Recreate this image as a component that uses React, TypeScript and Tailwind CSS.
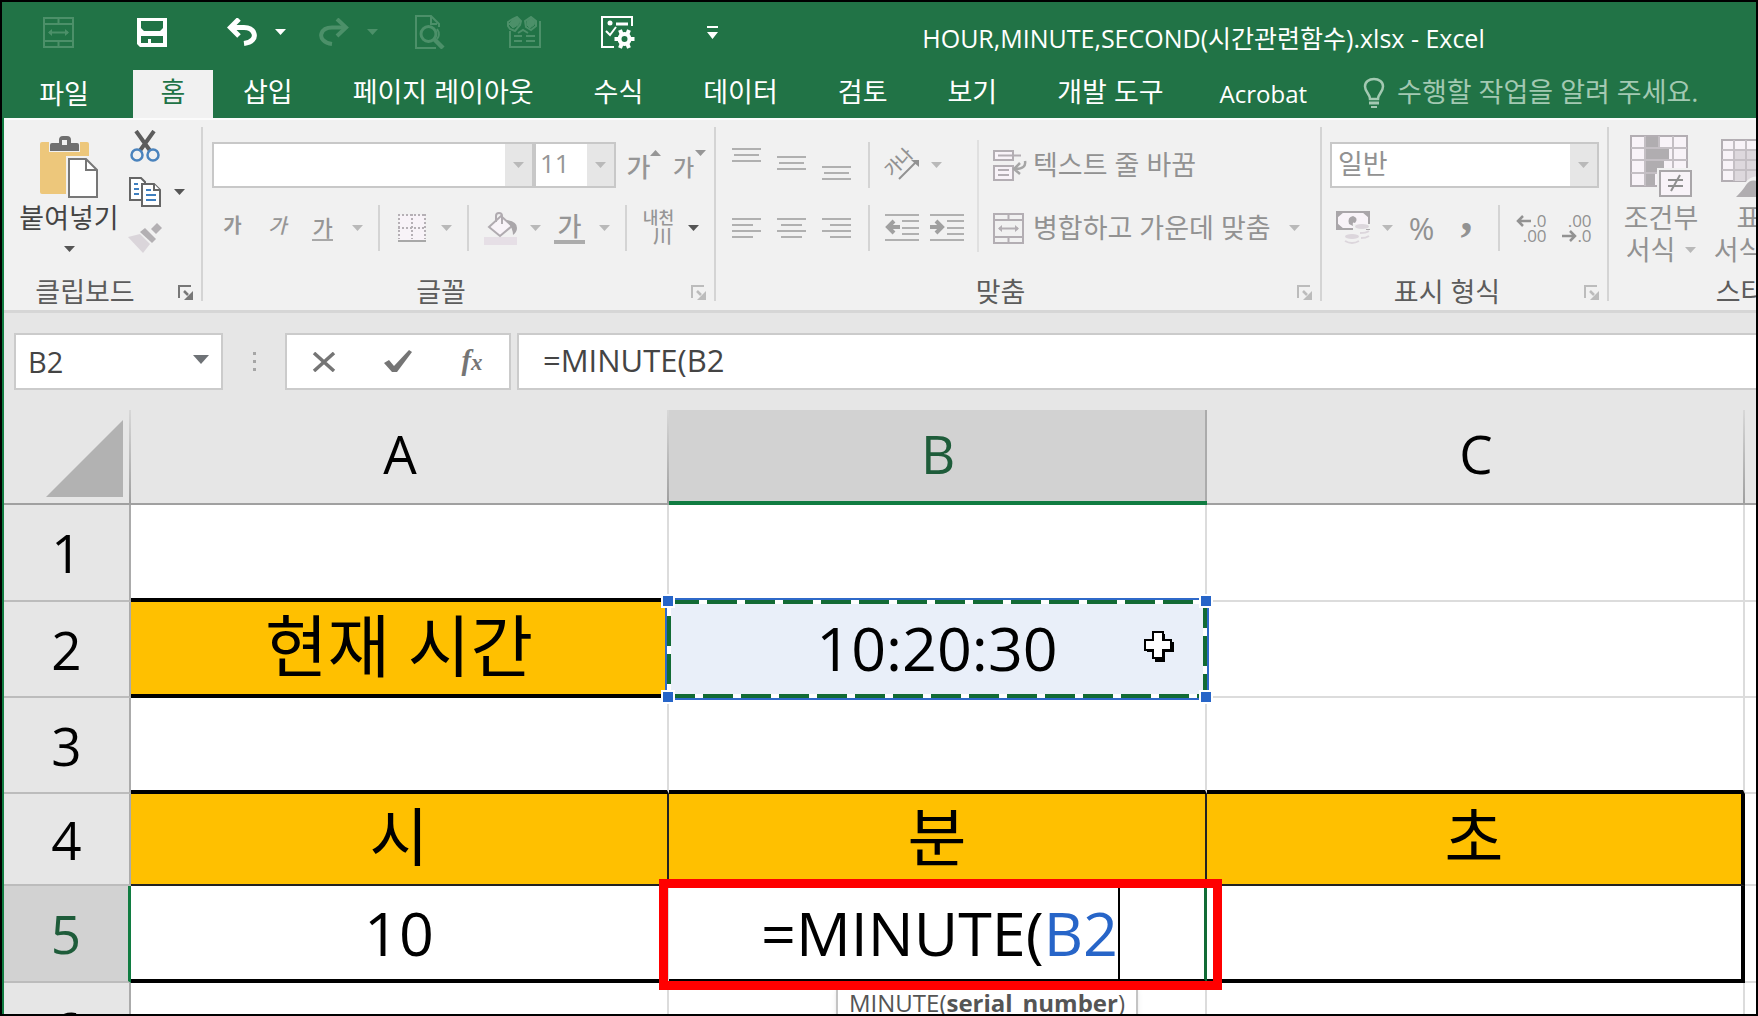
import React from "react";

type Kids = { children?: React.ReactNode };

/* ---------- small shared parts ---------- */

function Caret({ className = "" }: { className?: string }) {
  return (
    <svg viewBox="0 0 11 6" className={`h-[6px] w-[11px] shrink-0 ${className}`} aria-hidden="true">
      <path d="M0 0H11L5.5 6Z" fill="currentColor" />
    </svg>
  );
}

function Tool({ label, children, className = "" }: Kids & { label: string; className?: string }) {
  return (
    <button type="button" aria-label={label} className={`flex h-[46px] w-[45px] shrink-0 items-center justify-center ${className}`}>
      {children}
    </button>
  );
}

function MenuArrow({ label, dark = false }: { label: string; dark?: boolean }) {
  return (
    <button
      type="button"
      aria-label={label}
      className={`flex h-[46px] w-6 shrink-0 items-center justify-center ${dark ? "text-[#555555]" : "text-[#b9b9b9]"}`}
    >
      <Caret />
    </button>
  );
}

function InnerLine() {
  return (
    <span className="flex h-[46px] w-5 shrink-0 justify-center">
      <span className="w-[2px] bg-[#d4d4d4]" />
    </span>
  );
}

function GroupLine() {
  return <span className="mt-[7px] h-[174px] w-[2px] shrink-0 bg-[#d4d4d4]" />;
}

function GroupLabel({ text, dark = false, launcher = true }: { text: string; dark?: boolean; launcher?: boolean }) {
  return (
    <div className="mt-auto flex h-8 items-center pr-2 text-[#5c5c5c]">
      <span className="flex-1 text-center leading-8 whitespace-nowrap">{text}</span>
      {launcher && (
        <button type="button" aria-label={`${text} 설정`} className={`flex w-[27px] justify-end ${dark ? "text-[#777777]" : "text-[#bcbcbc]"}`}>
          <svg viewBox="0 0 15 15" className="h-[15px] w-[15px]" fill="none" stroke="currentColor" aria-hidden="true">
            <path d="M1 13V1H13" strokeWidth="2" />
            <path d="M15 6V15H6Z" fill="currentColor" stroke="none" />
            <path d="M6 6L10 10" strokeWidth="2.500" />
          </svg>
        </button>
      )}
    </div>
  );
}

function Bars({ rows, height }: { rows: [number, number, number][]; height: number }) {
  return (
    <svg viewBox={`0 0 29 ${height}`} width="29" height={height} aria-hidden="true">
      {rows.map(([x, y, w], i) => (
        <rect key={i} x={x} y={y} width={w} height="2" fill="#b0b0b0" />
      ))}
    </svg>
  );
}

/* ---------- title bar ---------- */

function MergeIcon({ className = "" }: { className?: string }) {
  return (
    <svg viewBox="0 0 31 31" className={`h-[31px] w-[31px] ${className}`} fill="none" stroke="currentColor" strokeWidth="2" aria-hidden="true">
      <path d="M1 1H30V30H1ZM1 7H30M1 24H30M15.500 1V7M15.500 24V30" />
      <path d="M6 15.500H25" />
      <path d="M9 12L5 15.500L9 19ZM22 12L26 15.500L22 19Z" fill="currentColor" strokeWidth="0" />
    </svg>
  );
}

function UndoIcon({ flip = false }: { flip?: boolean }) {
  return (
    <svg viewBox="0 0 30 28" className="h-7 w-[30px]" fill="none" stroke="currentColor" strokeWidth={flip ? 4 : 5} aria-hidden="true">
      {flip ? (
        <>
          <path d="M13 26C5 25 1 20 2.500 15.500C4 11 8 9.500 13 9.500H26" />
          <path d="M18 1L27 9.500L18 18" />
        </>
      ) : (
        <>
          <path d="M17 25.500C25 24.500 28.500 20 27 15.500C25.500 11 22 9.500 17 9.500H4" />
          <path d="M12 1L3.500 9.500L12 18" />
        </>
      )}
    </svg>
  );
}

function QuickAccess() {
  const cell = "flex h-full w-[94px] shrink-0 items-center justify-center";
  const pair = "flex h-full w-[92px] shrink-0 items-center gap-[18px] pl-7";
  return (
    <div className="flex h-full shrink-0 pl-[9px] text-white">
      <button type="button" aria-label="셀 병합" className={`${cell} text-[#4c9069]`}>
        <MergeIcon />
      </button>
      <button type="button" aria-label="저장" className={cell}>
        <svg viewBox="0 0 30 30" className="h-[30px] w-[30px]" aria-hidden="true">
          <path
            d="M0 1H30V30H3L0 27ZM4 4V11L7 14H23L26 11V4ZM4 19V26H11V22H14V26H26V19Z"
            fill="currentColor"
            fillRule="evenodd"
          />
        </svg>
      </button>
      <div className={pair}>
        <button type="button" aria-label="실행 취소"><UndoIcon /></button>
        <button type="button" aria-label="실행 취소 목록"><Caret /></button>
      </div>
      <div className={`${pair} text-[#4c9069]`}>
        <button type="button" aria-label="다시 실행"><UndoIcon flip /></button>
        <button type="button" aria-label="다시 실행 목록"><Caret /></button>
      </div>
      <button type="button" aria-label="인쇄 미리 보기" className={`${cell} text-[#4c9069]`}>
        <svg viewBox="0 0 30 34" className="h-[34px] w-[30px]" fill="none" stroke="currentColor" aria-hidden="true">
          <path d="M21 33H1V1H16L24 9V12M16 1V9H22" strokeWidth="2" />
          <circle cx="13.500" cy="19" r="7.500" strokeWidth="3" />
          <path d="M19 24L28 33" strokeWidth="4.500" />
          <path d="M22 14C25 18 24 22 22 24" strokeWidth="2" />
        </svg>
      </button>
      <button type="button" aria-label="공유 통합 문서" className={`${cell} text-[#4c9069]`}>
        <svg viewBox="0 0 34 32" className="h-8 w-[34px]" fill="none" stroke="currentColor" strokeWidth="2" aria-hidden="true">
          <path d="M3 15V31H33V5" />
          <path d="M7 20H15M19 20H28M7 25H15M19 25H28" />
          <path d="M1 6L6 3L10 1L14 5L13 9L8 15L3 13L1 10Z" />
          <path d="M6 4L10 2L13 5L11 9L6 12L2 8Z" fill="currentColor" strokeWidth="1" />
          <path d="M18 5L24 1L29 5V10L24 14L19 11Z" />
          <path d="M20 5L24 2L28 5L27 9L23 12L20 9Z" fill="currentColor" strokeWidth="1" />
          <path d="M11 17L16 14L21 17" />
        </svg>
      </button>
      <button type="button" aria-label="옵션" className={cell}>
        <svg viewBox="0 0 34 33" className="h-[33px] w-[34px]" fill="none" stroke="currentColor" strokeWidth="2" aria-hidden="true">
          <path d="M13 31H1V1H31V10" />
          <circle cx="9" cy="7" r="2.500" fill="currentColor" stroke="none" />
          <path d="M15 8H27" strokeWidth="3" />
          <path d="M5 15L9 19L15 11" strokeWidth="2" />
          <circle cx="23.500" cy="23" r="5" strokeWidth="4" />
          <path d="M19 14L21 19M28 14L26 19M19 32L21 27M28 32L26 27M13.500 23H18M29 23H33.500" strokeWidth="4" />
        </svg>
      </button>
      <button type="button" aria-label="빠른 실행 도구 모음 사용자 지정" className={cell}>
        <svg viewBox="0 0 11 13" className="h-[13px] w-[11px]" fill="currentColor" aria-hidden="true">
          <path d="M0 0H11V2H0ZM0 6H11L5.500 13Z" />
        </svg>
      </button>
    </div>
  );
}

const tabs = ["삽입", "페이지 레이아웃", "수식", "데이터", "검토", "보기", "개발 도구"];

function TitleBar() {
  return (
    <header className="shrink-0 overflow-hidden bg-[#217346] text-white">
      <div className="flex h-[60px]">
        <QuickAccess />
        <h1 className="flex-1 pt-[14px] pr-[108px] text-center text-[25px] leading-[44px] whitespace-nowrap">
          HOUR,MINUTE,SECOND(시간관련함수).xlsx - Excel
        </h1>
      </div>
      <nav className="mt-2 flex h-12 items-stretch whitespace-nowrap">
        <button type="button" className="mr-[7px] w-[124px] shrink-0">파일</button>
        <button type="button" className="w-20 shrink-0 bg-[#f1f1f1] pb-1 text-[#217346]">홈</button>
        {tabs.map((t) => (
          <button key={t} type="button" className="shrink-0 px-[30px] pb-1">{t}</button>
        ))}
        <button type="button" className="shrink-0 px-[26px] text-[24px]">Acrobat</button>
        <button type="button" className="flex shrink-0 items-center gap-3 pb-1 pl-[30px] text-[#a3c9b2]">
          <svg viewBox="0 0 22 31" className="h-[31px] w-[22px]" fill="none" stroke="currentColor" strokeWidth="2.500" aria-hidden="true">
            <path d="M7 22C7 17 2 15 2 9.500C2 5 6 2 11 2S20 5 20 9.500C20 15 15 17 15 22Z" />
            <path d="M6 26H16" strokeWidth="3" />
            <path d="M8 30H14" strokeWidth="2" />
          </svg>
          수행할 작업을 알려 주세요.
        </button>
      </nav>
    </header>
  );
}

/* ---------- ribbon groups ---------- */

function ClipboardGroup() {
  return (
    <section className="flex w-[197px] shrink-0 flex-col pb-[2px]">
      <div className="flex pt-[3px] pl-3">
        <button type="button" className="flex w-[106px] shrink-0 flex-col items-center pt-[13px] text-[#444444]">
          <svg viewBox="0 0 58 62" className="h-[62px] w-[58px]" aria-hidden="true">
            <rect x="0" y="6" width="49" height="52" rx="2" fill="#edc77b" />
            <path d="M9 4H40V16H9Z" fill="#f1f1f1" />
            <path d="M10 15V9Q10 7 12 7H19V4Q19 0 23 0H27Q31 0 31 4V7H37Q39 7 39 9V15Z" fill="#6f6f6f" />
            <rect x="22" y="4" width="5" height="5" fill="#f1f1f1" />
            <path d="M26 20H49L58 30V62H26Z" fill="#f1f1f1" />
            <path d="M29 23H46L57 34V61H29Z" fill="#ffffff" stroke="#777777" strokeWidth="2" />
            <path d="M46 23V34H57" fill="none" stroke="#777777" strokeWidth="2" />
          </svg>
          <span className="mt-1 leading-8 whitespace-nowrap">붙여넣기</span>
          <Caret className="mt-3 text-[#555555]" />
        </button>
        <div className="flex flex-col">
          <div className="flex">
            <Tool label="잘라내기">
              <svg viewBox="0 0 30 32" className="h-8 w-[30px]" fill="none" aria-hidden="true">
                <path d="M6 1L21 22M24 1L9 22" stroke="#5d5d5d" strokeWidth="4" />
                <circle cx="7" cy="25" r="5.500" stroke="#4a83bd" strokeWidth="2.500" fill="#f1f1f1" />
                <circle cx="23" cy="25" r="5.500" stroke="#4a83bd" strokeWidth="2.500" fill="#f1f1f1" />
              </svg>
            </Tool>
          </div>
          <div className="flex">
            <Tool label="복사">
              <svg viewBox="0 0 32 30" className="h-[30px] w-8" fill="#ffffff" stroke="#666666" strokeWidth="2" aria-hidden="true">
                <path d="M1 1H12L16 5V23H1Z" />
                <path d="M5 7H9M5 12H10M5 17H10" stroke="#3f7fbf" />
                <path d="M13 7H25L31 13V29H13Z" />
                <path d="M25 7V13H31" />
                <path d="M17 13H22M17 18H27M17 23H27" stroke="#3f7fbf" />
              </svg>
            </Tool>
            <MenuArrow label="복사 옵션" dark />
          </div>
          <Tool label="서식 복사">
            <svg viewBox="0 0 34 30" className="h-[30px] w-[34px]" aria-hidden="true">
              <path d="M0 14L12 11L22 21L15 30Z" fill="#dad5da" />
              <path d="M12 9L17 5L28 16L24 20Z" fill="#b3b0b3" />
              <path d="M23 6L29 0L34 5L28 11Z" fill="#b3b0b3" />
            </svg>
          </Tool>
        </div>
      </div>
      <GroupLabel text="클립보드" dark />
    </section>
  );
}

function FontGroup() {
  return (
    <section className="flex w-[511px] shrink-0 flex-col pt-[22px] pb-[2px] text-[#969696]">
      <div className="flex pl-[9px]">
        <div className="flex h-[46px] w-[322px] border-2 border-[#c8c8c8] bg-white">
          <input aria-label="글꼴 이름" defaultValue="" className="min-w-0 flex-1 px-2 outline-none" />
          <button type="button" aria-label="글꼴 목록" className="flex w-[27px] items-center justify-center bg-[#e6e6e6] text-[#b9b9b9]"><Caret /></button>
        </div>
        <div className="flex h-[46px] w-[82px] border-2 border-[#c8c8c8] bg-white">
          <input aria-label="글꼴 크기" defaultValue="11" className="min-w-0 flex-1 pb-1 pl-1 text-[26px] outline-none" />
          <button type="button" aria-label="크기 목록" className="flex w-[27px] items-center justify-center bg-[#e6e6e6] text-[#b9b9b9]"><Caret /></button>
        </div>
        <Tool label="글꼴 크기 크게" className="relative font-medium">
          <span className="pt-1 text-[26px] leading-8">가</span>
          <Caret className="absolute top-2 right-0 rotate-180" />
        </Tool>
        <Tool label="글꼴 크기 작게" className="relative font-medium">
          <span className="pt-1 text-[23px] leading-8">가</span>
          <Caret className="absolute top-2 right-0" />
        </Tool>
      </div>
      <div className="mt-[17px] flex pl-[7px]">
        <Tool label="굵게" className="pb-1"><span className="text-[20px] leading-6 font-bold">가</span></Tool>
        <Tool label="기울임꼴" className="pb-1"><span className="text-[20px] leading-6 font-medium italic">가</span></Tool>
        <Tool label="밑줄"><span className="border-b-2 border-[#a8a8a8] text-[22px] leading-6 font-medium">가</span></Tool>
        <MenuArrow label="밑줄 옵션" />
        <InnerLine />
        <Tool label="테두리">
          <svg viewBox="0 0 28 28" className="h-7 w-7" fill="none" stroke="#b5b0b5" strokeWidth="2" aria-hidden="true">
            <rect x="1" y="1" width="26" height="25" fill="#f8f3f8" stroke="none" />
            <path d="M0 1H28M0 14H28M1 0V25M14 0V25M27 0V25" strokeDasharray="2 2" />
            <path d="M0 27H28" stroke="#a8a8a8" />
          </svg>
        </Tool>
        <MenuArrow label="테두리 옵션" />
        <InnerLine />
        <Tool label="채우기 색">
          <svg viewBox="0 0 34 33" className="h-[33px] w-[34px]" aria-hidden="true">
            <rect x="0" y="25" width="33" height="8" fill="#e6dfe6" />
            <path d="M5 15L17 4L28 14L16 24Z" fill="#f8f3f8" stroke="#b0abb0" strokeWidth="2" />
            <path d="M12 10V4Q12 1 15 1T18 4V12" fill="none" stroke="#b0abb0" strokeWidth="2" />
            <path d="M22 8Q33 9 33 16Q33 20 29 23Q29 15 22 8Z" fill="#a9a6a9" />
          </svg>
        </Tool>
        <MenuArrow label="채우기 옵션" />
        <Tool label="글꼴 색"><span className="border-b-4 border-[#acacac] px-1 text-[26px] leading-7 font-medium">가</span></Tool>
        <MenuArrow label="글꼴 색 옵션" />
        <InnerLine />
        <Tool label="윗주" className="flex-col font-medium">
          <span className="text-[17px] leading-4">내천</span>
          <span className="pl-2 text-[19px] leading-5">川</span>
        </Tool>
        <MenuArrow label="윗주 옵션" dark />
      </div>
      <GroupLabel text="글꼴" />
    </section>
  );
}

function AlignGroup() {
  const edge: [number, number, number][] = [[0, 0, 29], [2, 6, 25], [0, 12, 29]];
  return (
    <section className="flex w-[604px] shrink-0 flex-col pb-[2px] text-[#929292]">
      <div className="flex pl-2">
        <div className="pt-[22px]">
          <div className="flex">
            <Tool label="위쪽 맞춤" className="pb-5"><Bars rows={edge} height={14} /></Tool>
            <Tool label="가운데 맞춤" className="pb-1"><Bars rows={edge} height={14} /></Tool>
            <Tool label="아래쪽 맞춤" className="pt-4"><Bars rows={edge} height={14} /></Tool>
            <InnerLine />
            <Tool label="방향" className="relative">
              <span className="-rotate-45 pb-2 text-[17px] leading-5 font-medium whitespace-nowrap">가나</span>
              <svg viewBox="0 0 22 22" className="absolute right-1 bottom-2 h-[22px] w-[22px]" fill="none" stroke="currentColor" strokeWidth="2" aria-hidden="true">
                <path d="M1 21L19 3" />
                <path d="M13 2H21V9Z" fill="currentColor" stroke="none" />
              </svg>
            </Tool>
            <MenuArrow label="방향 옵션" />
          </div>
          <div className="mt-[17px] flex">
            <Tool label="왼쪽 정렬"><Bars rows={[[0, 0, 29], [0, 6, 21], [0, 12, 29], [0, 18, 21]]} height={20} /></Tool>
            <Tool label="가운데 정렬"><Bars rows={[[0, 0, 29], [4, 6, 21], [0, 12, 29], [4, 18, 21]]} height={20} /></Tool>
            <Tool label="오른쪽 정렬"><Bars rows={[[0, 0, 29], [8, 6, 21], [0, 12, 29], [8, 18, 21]]} height={20} /></Tool>
            <InnerLine />
            <Tool label="내어쓰기">
              <svg viewBox="0 0 34 28" className="h-7 w-[34px]" fill="none" stroke="#b0b0b0" strokeWidth="2" aria-hidden="true">
                <path d="M0 1H34M17 7H34M17 14H34M17 20H34M0 26H34" />
                <path d="M3 13H15M9 7L3 13L9 19" stroke="#a0a0a0" strokeWidth="4" />
              </svg>
            </Tool>
            <Tool label="들여쓰기">
              <svg viewBox="0 0 34 28" className="h-7 w-[34px]" fill="none" stroke="#b0b0b0" strokeWidth="2" aria-hidden="true">
                <path d="M0 1H34M17 7H34M17 14H34M17 20H34M0 26H34" />
                <path d="M0 13H12M6 7L12 13L6 19" stroke="#a0a0a0" strokeWidth="4" />
              </svg>
            </Tool>
          </div>
        </div>
        <span className="mt-5 mr-[14px] ml-2 h-[112px] w-[2px] bg-[#e0e0e0]" />
        <div className="pt-[22px] whitespace-nowrap">
          <button type="button" className="flex h-[46px] items-center">
            <svg viewBox="0 0 34 31" className="mr-[6px] h-[31px] w-[34px]" fill="none" stroke="#b3aeb3" strokeWidth="2" aria-hidden="true">
              <path d="M1 1H20V10H1ZM5 5.500H28M1 16H20V30H1ZM5 20H16M5 25H16" fill="#f8f3f8" />
              <path d="M32 11C33 16 30 19 22 19M27 13L21 19L27 24" stroke="#a5a5a5" strokeWidth="2.500" />
            </svg>
            텍스트 줄 바꿈
          </button>
          <div className="mt-[17px] flex">
            <button type="button" className="flex h-[46px] items-center">
              <MergeIcon className="mr-[9px] text-[#b3aeb3]" />
              병합하고 가운데 맞춤
            </button>
            <span className="w-3" />
            <MenuArrow label="병합 옵션" />
          </div>
        </div>
      </div>
      <GroupLabel text="맞춤" />
    </section>
  );
}

function Decimals({ increase = false }: { increase?: boolean }) {
  const arrow = (
    <svg viewBox="0 0 16 12" className="h-3 w-4" fill="none" stroke="currentColor" strokeWidth="2.500" aria-hidden="true">
      {increase ? <path d="M15 6H2M7 1L2 6L7 11" /> : <path d="M1 6H14M9 1L14 6L9 11" />}
    </svg>
  );
  return (
    <span className="flex flex-col items-end text-[17px] leading-[15px] font-medium">
      <span className="flex items-center">{increase && arrow}{increase ? ".0" : ".00"}</span>
      <span className="flex items-center">{!increase && arrow}{increase ? ".00" : ".0"}</span>
    </span>
  );
}

function NumberGroup() {
  return (
    <section className="flex w-[285px] shrink-0 flex-col pt-[22px] pb-[2px] text-[#929292]">
      <div className="pl-2">
        <div className="relative h-[46px] w-[269px]">
          <select aria-label="표시 형식" className="h-full w-full appearance-none border-2 border-[#c8c8c8] bg-white pb-1 pl-[6px] outline-none">
            <option>일반</option>
          </select>
          <span className="pointer-events-none absolute top-[2px] right-[2px] flex h-[42px] w-[27px] items-center justify-center bg-[#e6e6e6] text-[#b9b9b9]"><Caret /></span>
        </div>
        <div className="mt-[17px] flex">
          <Tool label="회계 형식">
            <svg viewBox="0 0 34 34" className="h-[34px] w-[34px]" aria-hidden="true">
              <rect x="1" y="1" width="32" height="17" fill="#f8f3f8" stroke="#a9a6a9" strokeWidth="2" />
              <path d="M1 1H8L1 7ZM33 1H26L33 7ZM1 18H8L1 12Z" fill="#a9a6a9" />
              <path d="M13 13Q11 6 17 5Q23 7 19 12Q16 10 17 15Z" fill="#a9a6a9" />
              <path d="M17 13H34V18H30V26H24V34H9V23H17Z" fill="#f1f1f1" />
              <ellipse cx="26" cy="15.500" rx="7" ry="2.500" fill="#dcd6dc" />
              <path d="M24 22Q30 22 33 20M25 27Q30 27 33 25" stroke="#dcd6dc" strokeWidth="2" fill="none" />
              <ellipse cx="16" cy="25.500" rx="7" ry="2.500" fill="#dcd6dc" />
              <path d="M9 30Q16 34 23 30" stroke="#dcd6dc" strokeWidth="2" fill="none" />
            </svg>
          </Tool>
          <MenuArrow label="회계 옵션" />
          <Tool label="백분율 스타일"><span className="text-[31px] leading-9 font-medium">%</span></Tool>
          <Tool label="쉼표 스타일"><span className="pb-7 font-['Liberation_Serif',serif] text-[48px] leading-9 font-bold">,</span></Tool>
          <InnerLine />
          <Tool label="자릿수 늘림"><Decimals increase /></Tool>
          <Tool label="자릿수 줄임"><Decimals /></Tool>
        </div>
      </div>
      <GroupLabel text="표시 형식" />
    </section>
  );
}

function StyleGroup() {
  return (
    <section className="flex w-[296px] shrink-0 flex-col pb-[2px] text-[#929292]">
      <div className="flex pt-[15px] pl-[7px]">
        <button type="button" className="flex w-[90px] shrink-0 flex-col items-center whitespace-nowrap">
          <svg viewBox="0 0 62 62" className="h-[62px] w-[62px]" aria-hidden="true">
            <rect x="1" y="1" width="56" height="50" fill="#f8f3f8" stroke="#b3aeb3" strokeWidth="2" />
            <path d="M1 13H57M1 25H57M1 38H57M15 1V51M29 1V51M43 1V51" stroke="#c4bfc4" strokeWidth="2" />
            <path d="M16 2H28V12H16ZM16 14H39V24H16ZM16 26H34V37H16ZM16 39H25V50H16Z" fill="#b0adb0" />
            <rect x="27" y="33" width="35" height="29" fill="#f1f1f1" />
            <rect x="30" y="36" width="31" height="25" fill="#f8f3f8" stroke="#a9a6a9" strokeWidth="2" />
            <path d="M38 45H53M38 51H53M50 40L41 56" stroke="#8f8f8f" strokeWidth="2" />
          </svg>
          <span className="mt-[5px] leading-8">조건부</span>
          <span className="flex items-center gap-[10px] leading-8">서식 <Caret className="text-[#b9b9b9]" /></span>
        </button>
        <button type="button" className="flex w-[86px] shrink-0 flex-col items-center whitespace-nowrap">
          <svg viewBox="0 0 62 62" className="h-[62px] w-[62px]" aria-hidden="true">
            <rect x="4" y="5" width="52" height="41" fill="#f8f3f8" stroke="#b3aeb3" strokeWidth="2" />
            <rect x="17" y="16" width="39" height="30" fill="#ddd8dd" />
            <path d="M4 15H56M4 25H56M4 35H56M16 5V46M28 5V46M40 5V46" stroke="#c4bfc4" strokeWidth="2" />
            <path d="M17 62Q22 54 27 48Q33 40 42 42L58 26L62 30V62Z" fill="#f1f1f1" />
            <path d="M18 62Q25 55 28 50Q33 43 41 47V62Z" fill="#b0adb0" />
          </svg>
          <span className="mt-[5px] leading-8">표</span>
          <span className="flex items-center gap-[10px] leading-8">서식 <Caret className="text-[#b9b9b9]" /></span>
        </button>
      </div>
      <GroupLabel text="스타일" launcher={false} />
    </section>
  );
}

/* ---------- formula bar ---------- */

function FormulaBar() {
  return (
    <div className="flex shrink-0 border-t-[3px] border-[#d6d6d6] bg-[#e6e6e6] pt-5 pb-5 pl-[10px] text-[29px] text-[#444444]">
      <div className="flex h-[57px] w-[209px] shrink-0 border-2 border-[#cbcbcb] bg-white">
        <input aria-label="이름 상자" defaultValue="B2" className="min-w-0 flex-1 pl-3 outline-none" />
        <button type="button" aria-label="이름 목록" className="flex w-10 items-center justify-center pb-1 text-[#6e7276]">
          <svg viewBox="0 0 16 9" className="h-[9px] w-4" aria-hidden="true"><path d="M0 0H16L8 9Z" fill="currentColor" /></svg>
        </button>
      </div>
      <div className="flex w-[62px] shrink-0 flex-col items-center justify-center gap-[5px]">
        <span className="h-[3px] w-[3px] bg-[#a6a6a6]" />
        <span className="h-[3px] w-[3px] bg-[#a6a6a6]" />
        <span className="h-[3px] w-[3px] bg-[#a6a6a6]" />
      </div>
      <div className="mr-[6px] flex h-[57px] w-[226px] shrink-0 items-center border-2 border-[#cbcbcb] bg-white text-[#757575]">
        <button type="button" aria-label="취소" className="flex flex-1 justify-center">
          <svg viewBox="0 0 24 20" className="h-5 w-6" fill="none" stroke="currentColor" strokeWidth="3.500" aria-hidden="true"><path d="M2 1L22 19M22 1L2 19" /></svg>
        </button>
        <button type="button" aria-label="입력" className="flex flex-1 justify-center">
          <svg viewBox="0 0 28 23" className="h-[23px] w-7" fill="currentColor" aria-hidden="true"><path d="M0 13L5 10L10 16L25 0L28 2L13 22H8Z" /></svg>
        </button>
        <button type="button" aria-label="함수 삽입" className="flex-1 text-center font-['Liberation_Serif',serif] text-[29px] leading-8 font-bold italic">
          f<span className="text-[23px]">x</span>
        </button>
      </div>
      <input aria-label="수식 입력줄" defaultValue="=MINUTE(B2" className="h-[57px] min-w-0 flex-1 border-2 border-r-0 border-[#cbcbcb] bg-white pb-1 pl-6 text-[31px] outline-none" />
    </div>
  );
}

/* ---------- sheet ---------- */

function ColumnHead({ name, active = false }: { name: string; active?: boolean }) {
  const tone = active
    ? "border-b-[4px] border-[#107c41] bg-[#d2d2d2] bg-[linear-gradient(#ababab,#ababab)] pb-1 text-[#1e5c3a]"
    : "border-b-2 border-[#a0a0a0] bg-[#e6e6e6] bg-[linear-gradient(to_bottom,#d8d8d8,#9f9f9f)] pb-[6px] text-black";
  return (
    <th scope="col" className={`bg-[length:2px_100%] bg-right bg-no-repeat px-0 pt-0 font-normal ${tone}`}>{name}</th>
  );
}

function RowHead({ n, active = false }: { n: number; active?: boolean }) {
  return (
    <th
      scope="row"
      className={`border-b-2 border-b-[#bcbcbc] p-0 font-normal ${
        active ? "border-r-[3px] border-r-[#107c41] bg-[#d2d2d2] text-[#1e5c3a]" : "border-r-2 border-r-[#ababab] bg-[#e6e6e6] text-black"
      }`}
    >
      {n}
    </th>
  );
}

const grid = "border-r-2 border-b-2 border-[#dcdcdc] p-0";
const edgeBelow = "border-r-2 border-b-4 border-r-[#dcdcdc] border-b-black p-0";
const handle = "absolute h-[14px] w-[14px] border-2 border-white bg-[#2765c8]";

function Sheet() {
  return (
    <main className="min-h-0 flex-1 overflow-hidden bg-white">
      <table className="w-full table-fixed border-separate border-spacing-0 text-center text-[53px] leading-none">
        <colgroup>
          <col className="w-[127px]" />
          <col className="w-[538px]" />
          <col className="w-[538px]" />
          <col className="w-[538px]" />
          <col />
        </colgroup>
        <thead>
          <tr className="h-[95px]">
            <th className="border-b-2 border-[#a0a0a0] bg-[#e6e6e6] bg-[linear-gradient(to_bottom,#d8d8d8,#9f9f9f)] bg-[length:2px_100%] bg-right bg-no-repeat p-0">
              <button type="button" aria-label="모두 선택" className="mt-1 ml-auto block pr-2">
                <svg viewBox="0 0 77 77" className="h-[77px] w-[77px]" aria-hidden="true"><path d="M77 0V77H0Z" fill="#b2b2b2" /></svg>
              </button>
            </th>
            <ColumnHead name="A" />
            <ColumnHead name="B" active />
            <ColumnHead name="C" />
            <th className="border-b-2 border-[#a0a0a0] bg-[#e6e6e6]" />
          </tr>
        </thead>
        <tbody className="text-[61px] [&_th]:text-[53px]">
          <tr className="h-[97px]">
            <RowHead n={1} />
            <td className={edgeBelow} />
            <td className={grid} />
            <td className={grid} />
            <td className="border-b-2 border-[#dcdcdc]" />
          </tr>
          <tr className="h-24">
            <RowHead n={2} />
            <td className="border-r-2 border-b-4 border-r-[#ffc000] border-b-black bg-[#ffc000] p-0 pb-1 text-[68px]">현재 시간</td>
            <td className={`${grid} relative bg-[#e9eff9]`}>
              <span className="block pb-1">10:20:30</span>
              <svg className="absolute -top-1 -left-1 h-[calc(100%+8px)] w-[calc(100%+8px)]" fill="none" aria-hidden="true">
                <rect x="1" y="1" className="h-[calc(100%-2px)] w-[calc(100%-2px)]" stroke="#2f69c9" strokeWidth="2" />
                <rect x="4" y="4" className="h-[calc(100%-8px)] w-[calc(100%-8px)]" stroke="#ffffff" strokeWidth="4" />
                <rect x="4" y="4" className="h-[calc(100%-8px)] w-[calc(100%-8px)]" stroke="#126b35" strokeWidth="4" strokeDasharray="30 8" />
              </svg>
              <span className={`${handle} -top-2 -left-2`} />
              <span className={`${handle} -top-2 -right-2`} />
              <span className={`${handle} -bottom-2 -left-2`} />
              <span className={`${handle} -right-2 -bottom-2`} />
              <svg viewBox="0 0 32 32" className="absolute top-7 right-[30px] h-8 w-8" aria-hidden="true">
                <path d="M12 4H22V12H31V22H22V32H12V22H4V12H12Z" fill="#000000" />
                <path d="M10 2H20V10H28V20H20V28H10V20H2V10H10Z" fill="#ffffff" stroke="#000000" strokeWidth="2" />
              </svg>
            </td>
            <td className={grid} />
            <td className="border-b-2 border-[#dcdcdc]" />
          </tr>
          <tr className="h-24">
            <RowHead n={3} />
            <td className={edgeBelow} />
            <td className={edgeBelow} />
            <td className={edgeBelow} />
            <td className="border-b-2 border-[#dcdcdc]" />
          </tr>
          <tr className="h-[92px] text-[64px]">
            <RowHead n={4} />
            <td className="border-r-2 border-b-2 border-[#222222] bg-[#ffc000] p-0 pb-1">시</td>
            <td className="border-r-2 border-b-2 border-[#222222] bg-[#ffc000] p-0 pb-1">분</td>
            <td className="border-r-4 border-b-2 border-r-black border-b-[#222222] bg-[#ffc000] p-0 pb-1">초</td>
            <td className="border-b-2 border-[#dcdcdc]" />
          </tr>
          <tr className="h-[97px]">
            <RowHead n={5} active />
            <td className={edgeBelow}>10</td>
            <td className="relative border-r-[3px] border-b-4 border-r-[#126b35] border-b-black p-0">
              <div className="flex items-center justify-end pr-[84px] whitespace-nowrap">
                =MINUTE(<span className="text-[#2765c8]">B2</span>
                <span className="h-[92px] w-[2px] bg-black" />
              </div>
              <div className="absolute top-[99px] left-[167px] rounded-sm border-2 border-[#c4c4c4] bg-white px-[11px] text-[24px] leading-8 whitespace-nowrap text-[#555555] shadow-md">
                MINUTE(<b>serial_number</b>)
              </div>
              <div className="absolute -top-[7px] -right-[18px] -bottom-[11px] -left-[10px] border-[9px] border-[#ff0000]" />
            </td>
            <td className="border-r-4 border-b-4 border-black p-0" />
            <td className="border-b-2 border-[#dcdcdc]" />
          </tr>
          <tr className="h-[97px]">
            <RowHead n={6} />
            <td className={grid} />
            <td className={grid} />
            <td className={grid} />
            <td className="border-b-2 border-[#dcdcdc]" />
          </tr>
        </tbody>
      </table>
    </main>
  );
}

export default function App() {
  return (
    <div className="flex h-screen flex-col overflow-hidden border-2 border-black bg-[#e6e6e6] font-['Open_Sans','Noto_Sans_CJK_KR',sans-serif] text-[27px]">
      <TitleBar />
      <div className="flex min-h-0 flex-1 flex-col border-l-2 border-[#107c41]">
        <div className="flex h-[192px] shrink-0 overflow-hidden border-t-2 border-[#fbfbfb] bg-[#f1f1f1]">
          <ClipboardGroup />
          <GroupLine />
          <FontGroup />
          <GroupLine />
          <AlignGroup />
          <GroupLine />
          <NumberGroup />
          <GroupLine />
          <StyleGroup />
        </div>
        <FormulaBar />
        <Sheet />
      </div>
    </div>
  );
}
